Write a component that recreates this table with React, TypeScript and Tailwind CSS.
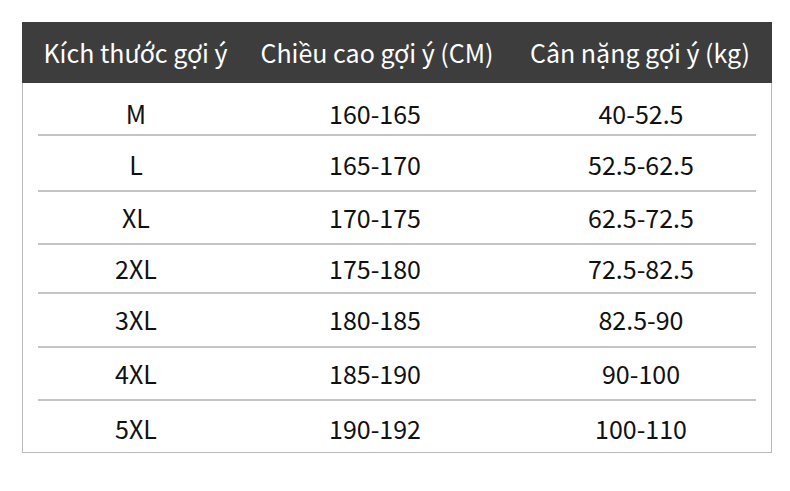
const rows = [
	{ size: "M", height: "160-165", weight: "40-52.5", cls: "h-[54px] pt-3" },
	{ size: "L", height: "165-170", weight: "52.5-62.5", cls: "h-[56px] pt-1" },
	{ size: "XL", height: "170-175", weight: "62.5-72.5", cls: "h-[53px]" },
	{ size: "2XL", height: "175-180", weight: "72.5-82.5", cls: "h-[49px]" },
	{ size: "3XL", height: "180-185", weight: "82.5-90", cls: "h-[54px]" },
	{ size: "4XL", height: "185-190", weight: "90-100", cls: "h-[53px]" },
	{ size: "5XL", height: "190-192", weight: "100-110", cls: "h-[51px] pt-1" },
];

export default function App() {
	return (
		<div className="h-[491px] w-[790px] bg-white pl-[22px] pt-[22px] font-['Noto_Sans_CJK_SC','Noto_Sans',sans-serif]">
			<div className="w-[750px] border border-[#b9b9b9]">
				<div className="-m-px flex h-[61px] items-center bg-[#3d3d3d] text-[25px] text-white">
					<div className="w-[227px] shrink-0 text-center">Kích thước gợi ý</div>
					<div className="w-[256px] shrink-0 text-center">Chiều cao gợi ý (CM)</div>
					<div className="w-[270px] shrink-0 text-center">Cân nặng gợi ý (kg)</div>
				</div>
				<div className="px-[15px]">
					{rows.map((r, i) => (
						<div
							key={r.size}
							className={`flex items-center text-[25px] text-[#111] ${r.cls} ${
								i < rows.length - 1 ? "border-b-2 border-[#c4c4c4]" : ""
							}`}
						>
							<div className="w-[196px] shrink-0 text-center">{r.size}</div>
							<div className="w-[282px] shrink-0 text-center">{r.height}</div>
							<div className="w-[250px] shrink-0 text-center">{r.weight}</div>
						</div>
					))}
				</div>
			</div>
		</div>
	);
}
